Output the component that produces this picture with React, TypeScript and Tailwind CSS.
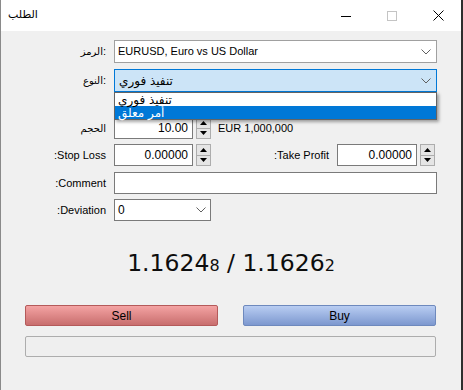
import React from "react";

const UI = { fontFamily: '"Liberation Sans", "DejaVu Sans", sans-serif' };
const AR = { fontFamily: '"DejaVu Sans", sans-serif' };

function Chevron() {
  return (
    <svg width="10" height="6" viewBox="0 0 10 6" className="block">
      <path d="M0.5 0.5 L5 5 L9.5 0.5" fill="none" stroke="#606060" strokeWidth="1" />
    </svg>
  );
}

function Spinner() {
  return (
    <div className="ml-[3px] flex h-[22px] w-[15px] flex-col border border-[#adadad] bg-[#e5e5e5]">
      <div className="flex flex-1 items-center justify-center border-b border-[#adadad]">
        <svg width="7" height="4" viewBox="0 0 7 4"><path d="M0 4 L3.5 0 L7 4 Z" fill="#000" /></svg>
      </div>
      <div className="flex flex-1 items-center justify-center">
        <svg width="7" height="4" viewBox="0 0 7 4"><path d="M0 0 L3.5 4 L7 0 Z" fill="#000" /></svg>
      </div>
    </div>
  );
}

function Label({ children }: { children: React.ReactNode }) {
  return <div className="flex w-[81px] shrink-0 items-center justify-end text-[11px] text-black">{children}</div>;
}

function ArLabel({ word, colon }: { word: string; colon?: boolean }) {
  return (
    <Label>
      <span className="text-[10px]" style={AR}>{word}</span>
      {colon ? <span className="text-[11px]">:</span> : null}
    </Label>
  );
}

export default function App() {
  return (
    <div
      className="flex h-[390px] w-[463px] flex-col overflow-hidden border-l border-r-2 border-l-[#8a8a8a] border-r-[#2e2e2e] bg-[#f0f0f0]"
      style={UI}
    >
      {/* Title bar */}
      <div className="flex h-[31px] shrink-0 items-center bg-white">
        <div className="ml-[7px] text-[11px] text-black" style={AR}>
          الطلب
        </div>
        <div className="ml-auto flex h-full items-center">
          <div className="flex h-full w-[46px] items-center justify-center">
            <svg width="10" height="10" viewBox="0 0 10 10"><path d="M0 5.5 H10" stroke="#000" strokeWidth="1" /></svg>
          </div>
          <div className="flex h-full w-[46px] items-center justify-center">
            <svg width="10" height="10" viewBox="0 0 10 10"><rect x="0.5" y="0.5" width="9" height="9" fill="none" stroke="#c4c4c4" strokeWidth="1" /></svg>
          </div>
          <div className="flex h-full w-[46px] items-center justify-center">
            <svg width="11" height="11" viewBox="0 0 11 11"><path d="M0.5 0.5 L10.5 10.5 M10.5 0.5 L0.5 10.5" stroke="#000" strokeWidth="1" /></svg>
          </div>
        </div>
      </div>

      {/* Body */}
      <div className="flex flex-1 flex-col pl-[24px] pr-[24px]">
        {/* Symbol */}
        <div className="mt-[9px] flex h-[23px] items-center">
          <ArLabel word="الرمز" colon />
          <div className="ml-[8px] flex h-[23px] w-[323px] items-center border border-[#a0a0a0] bg-white pl-[3px] pr-[5px]">
            <span className="text-[11px] text-black">EURUSD, Euro vs US Dollar</span>
            <div className="ml-auto"><Chevron /></div>
          </div>
        </div>

        {/* Type */}
        <div className="relative mt-[6px] flex h-[23px] items-center">
          <ArLabel word="النوع" colon />
          <div className="ml-[8px] flex h-[23px] w-[323px] items-center border border-[#0078d7] bg-[#cce4f7] pl-[4px] pr-[5px]">
            <span className="text-[12px] text-black" style={AR}>تنفيذ فوري</span>
            <div className="ml-auto"><Chevron /></div>
          </div>
          <div className="absolute left-[89px] top-[23px] z-10 w-[323px] border border-[#646464] bg-white shadow-[2px_2px_3px_rgba(0,0,0,0.35)]">
            <div className="flex h-[13px] items-center pl-[3px] text-[12px] text-black" style={AR}>
              تنفيذ فوري
            </div>
            <div className="flex h-[13px] items-center bg-[#0078d7] pl-[3px] text-[12px] text-white" style={AR}>
              أمر معلق
            </div>
          </div>
        </div>

        {/* Volume */}
        <div className="mt-[25px] flex h-[22px] items-center">
          <ArLabel word="الحجم" />
          <div className="ml-[8px] flex h-[22px] w-[79px] items-center justify-end border border-[#7a7a7a] bg-white pr-[4px] text-[12px] text-black">
            10.00
          </div>
          <Spinner />
          <span className="ml-[7px] text-[11px] text-black">EUR 1,000,000</span>
        </div>

        {/* SL / TP */}
        <div className="mt-[5px] flex h-[22px] items-center">
          <Label>:Stop Loss</Label>
          <div className="ml-[8px] flex h-[22px] w-[79px] items-center justify-end border border-[#7a7a7a] bg-white pr-[4px] text-[12px] text-black">
            0.00000
          </div>
          <Spinner />
          <span className="ml-auto text-[11px] text-black">:Take Profit</span>
          <div className="ml-[8px] flex h-[22px] w-[80px] items-center justify-end border border-[#7a7a7a] bg-white pr-[4px] text-[12px] text-black">
            0.00000
          </div>
          <Spinner />
          <div className="w-[2px]" />
        </div>

        {/* Comment */}
        <div className="mt-[6px] flex h-[22px] items-center">
          <Label>:Comment</Label>
          <div className="ml-[8px] h-[22px] w-[323px] border border-[#7a7a7a] bg-white" />
        </div>

        {/* Deviation */}
        <div className="mt-[5px] flex h-[22px] items-center">
          <Label>:Deviation</Label>
          <div className="ml-[8px] flex h-[22px] w-[97px] items-center border border-[#7a7a7a] bg-white pl-[3px] pr-[4px]">
            <span className="text-[12px] text-black">0</span>
            <div className="ml-auto"><Chevron /></div>
          </div>
        </div>

        {/* Price */}
        <div className="flex h-[84px] items-center justify-center pt-[1px]">
          <div className="text-[23.5px] leading-none text-[#0d0d0d]" style={AR}>
            1.1624<span className="text-[16px]">8</span> / 1.1626<span className="text-[16px]">2</span>
          </div>
        </div>

        {/* Buttons */}
        <div className="flex h-[21px] items-stretch justify-between pr-[1px]">
          <div className="flex w-[193px] items-center justify-center rounded-[2px] border border-[#b45a5a] bg-gradient-to-b from-[#f4a3a3] to-[#c86e6e] text-[12px] text-black">
            Sell
          </div>
          <div className="flex w-[193px] items-center justify-center rounded-[2px] border border-[#6e89bd] bg-gradient-to-b from-[#b9cdf2] to-[#7d98cf] text-[12px] text-black">
            Buy
          </div>
        </div>

        {/* Progress */}
        <div className="mt-[10px] mr-[1px] h-[21px] rounded-[2px] border border-[#adadad] bg-[#efefef]" />
      </div>
    </div>
  );
}
